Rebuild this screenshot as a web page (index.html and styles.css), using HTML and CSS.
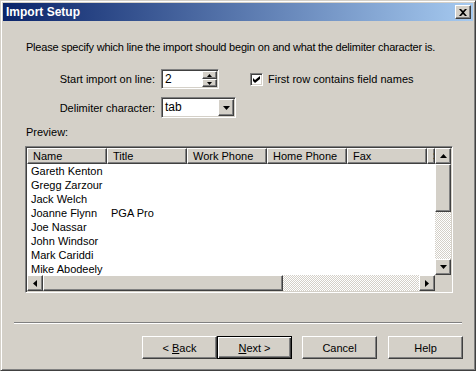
FILE: index.html
```html
<!DOCTYPE html>
<html lang="en">
<head>
  <meta charset="UTF-8" />
  <title>Import Setup</title>
  <link rel="stylesheet" href="styles.css">
</head>
<body>
  <div class="janela">
    <!-- barra de titulo -->
    <div class="titulo">
      <span class="titulo-texto">Import Setup</span>
      <div class="fechar">
        <svg width="8" height="7" viewBox="0 0 8 7"><path d="M0 0h2l2 2 2-2h2L5 3.5 8 7H6L4 5 2 7H0l3-3.5z" fill="#000"/></svg>
      </div>
    </div>

    <div class="conteudo">
      <p class="intro">Please specify which line the import should begin on and what the delimiter character is.</p>

      <div class="linha">
        <label class="rotulo">Start import on line:</label>
        <div class="spin">
          <span class="valor">2</span>
          <div class="spin-botoes">
            <div class="botao-mini"><svg width="5" height="3" viewBox="0 0 5 3"><path d="M2.5 0L5 3H0z" fill="#000"/></svg></div>
            <div class="botao-mini"><svg width="5" height="3" viewBox="0 0 5 3"><path d="M0 0h5L2.5 3z" fill="#000"/></svg></div>
          </div>
        </div>
        <div class="check">
          <div class="caixa">
            <svg width="7" height="7" viewBox="0 0 7 7"><path d="M0 2l2 2 5-4v3l-5 4-2-2z" fill="#000"/></svg>
          </div>
          <span>First row contains field names</span>
        </div>
      </div>

      <div class="linha">
        <label class="rotulo">Delimiter character:</label>
        <div class="combo">
          <span class="valor">tab</span>
          <div class="botao-combo"><svg width="7" height="4" viewBox="0 0 7 4"><path d="M0 0h7L3.5 4z" fill="#000"/></svg></div>
        </div>
      </div>

      <p class="preview-rotulo">Preview:</p>

      <div class="lista">
        <div class="lista-area">
          <div class="cabecalho">
            <div class="col">Name</div>
            <div class="col">Title</div>
            <div class="col">Work Phone</div>
            <div class="col">Home Phone</div>
            <div class="col">Fax</div>
            <div class="col col-ultima">S</div>
          </div>
          <div class="item"><span class="cel">Gareth Kenton</span><span class="cel"></span></div>
          <div class="item"><span class="cel">Gregg Zarzour</span><span class="cel"></span></div>
          <div class="item"><span class="cel">Jack Welch</span><span class="cel"></span></div>
          <div class="item"><span class="cel">Joanne Flynn</span><span class="cel">PGA Pro</span></div>
          <div class="item"><span class="cel">Joe Nassar</span><span class="cel"></span></div>
          <div class="item"><span class="cel">John Windsor</span><span class="cel"></span></div>
          <div class="item"><span class="cel">Mark Cariddi</span><span class="cel"></span></div>
          <div class="item"><span class="cel">Mike Abodeely</span><span class="cel"></span></div>
        </div>

        <div class="vscroll">
          <div class="seta"><svg width="7" height="4" viewBox="0 0 7 4"><path d="M3.5 0L7 4H0z" fill="#000"/></svg></div>
          <div class="polegar-v"></div>
          <div class="trilho"></div>
          <div class="seta"><svg width="7" height="4" viewBox="0 0 7 4"><path d="M0 0h7L3.5 4z" fill="#000"/></svg></div>
        </div>

        <div class="hscroll">
          <div class="seta"><svg width="4" height="7" viewBox="0 0 4 7"><path d="M0 3.5L4 0v7z" fill="#000"/></svg></div>
          <div class="polegar-h"></div>
          <div class="trilho"></div>
          <div class="seta"><svg width="4" height="7" viewBox="0 0 4 7"><path d="M0 0l4 3.5L0 7z" fill="#000"/></svg></div>
        </div>

        <div class="canto"></div>
      </div>

      <div class="separador"></div>

      <div class="botoes">
        <button class="botao">&lt; <u>B</u>ack</button>
        <button class="botao padrao"><u>N</u>ext &gt;</button>
        <button class="botao espaco">Cancel</button>
        <button class="botao espaco-help">Help</button>
      </div>
    </div>
  </div>
</body>
</html>
```

FILE: styles.css
```css
* {
  box-sizing: border-box;
}

body {
  margin: 0;
  font-family: "Liberation Sans", Arial, sans-serif;
  font-size: 11px;
  color: #000;
}

.janela {
  width: 476px;
  height: 371px;
  background: #d4d0c8;
  border: 1px solid;
  border-color: #d4d0c8 #404040 #404040 #d4d0c8;
  box-shadow: inset 1px 1px #fff, inset -1px -1px #808080;
  padding: 2px;
}

.titulo {
  height: 18px;
  background: linear-gradient(to right, #0a246a, #a6caf0);
  display: flex;
  align-items: center;
  justify-content: space-between;
  padding: 0 2px 0 2px;
}

.titulo-texto {
  color: #fff;
  font-weight: bold;
  font-size: 12px;
  padding-left: 1px;
}

.fechar,
.botao-mini,
.botao-combo,
.seta,
.polegar-v,
.polegar-h,
.col {
  background: #d4d0c8;
  border: 1px solid;
  border-color: #fff #404040 #404040 #fff;
  box-shadow: inset -1px -1px #808080;
}

.fechar {
  width: 16px;
  height: 14px;
  display: flex;
  align-items: center;
  justify-content: center;
}

.conteudo {
  padding: 20px 0 0 23px;
}

.intro {
  margin: 0;
  line-height: 13px;
  letter-spacing: -0.22px;
}

.linha {
  display: flex;
  align-items: center;
  margin-top: 15px;
}

.linha + .linha {
  margin-top: 8px;
}

.rotulo {
  width: 135px;
  text-align: right;
  padding-right: 6px;
}

.spin,
.combo,
.caixa,
.lista {
  background: #fff;
  border: 1px solid;
  border-color: #808080 #fff #fff #808080;
  box-shadow: inset 1px 1px #404040, inset -1px -1px #d4d0c8;
  padding: 1px;
}

.spin {
  width: 58px;
  height: 20px;
  display: flex;
}

.valor {
  flex: 1;
  padding-left: 2px;
  line-height: 16px;
  font-size: 12px;
}

.spin-botoes {
  width: 15px;
  display: flex;
  flex-direction: column;
}

.botao-mini {
  flex: 1;
  display: flex;
  align-items: center;
  justify-content: center;
}

.check {
  display: flex;
  align-items: center;
  margin-left: 31px;
  gap: 5px;
}

.caixa {
  width: 13px;
  height: 13px;
  display: flex;
  align-items: center;
  justify-content: center;
  padding: 0;
}

.combo {
  width: 75px;
  height: 21px;
  display: flex;
}

.botao-combo {
  width: 16px;
  display: flex;
  align-items: center;
  justify-content: center;
}

.preview-rotulo {
  margin: 8px 0 7px 0;
  line-height: 13px;
}

.lista {
  width: 428px;
  height: 147px;
  margin-left: -1px;
  display: grid;
  grid-template-columns: 408px 16px;
  grid-template-rows: 127px 16px;
  padding: 1px;
}

.lista-area {
  overflow: hidden;
  background: #fff;
}

.cabecalho {
  display: flex;
  height: 16px;
}

.col {
  flex: 0 0 80px;
  height: 16px;
  line-height: 14px;
  padding-left: 5px;
  white-space: nowrap;
  overflow: hidden;
}

.col-ultima {
  flex: 0 0 8px;
  padding-left: 5px;
}

.item {
  display: flex;
  height: 14px;
  line-height: 14px;
}

.cel {
  width: 80px;
  padding-left: 4px;
  white-space: nowrap;
}

.vscroll {
  display: flex;
  flex-direction: column;
}

.hscroll {
  display: flex;
}

.seta {
  flex: 0 0 16px;
  height: 16px;
  display: flex;
  align-items: center;
  justify-content: center;
}

.polegar-v {
  height: 48px;
}

.polegar-h {
  width: 240px;
}

.trilho {
  flex: 1;
  background: repeating-conic-gradient(#d4d0c8 0 25%, #fff 0 50%) 0 0 / 2px 2px;
}

.canto {
  background: #d4d0c8;
}

.separador {
  width: 448px;
  margin: 29px 0 0 -12px;
  border-top: 1px solid #808080;
  border-bottom: 1px solid #fff;
}

.botoes {
  display: flex;
  margin: 12px 0 0 116px;
}

.botao {
  width: 75px;
  height: 23px;
  font-family: inherit;
  font-size: 11px;
  color: #000;
  background: #d4d0c8;
  border: 1px solid;
  border-color: #fff #404040 #404040 #fff;
  box-shadow: inset -1px -1px #808080;
  padding: 0;
}

.padrao {
  border: 1px solid #000;
  box-shadow: inset 1px 1px #fff, inset -1px -1px #404040, inset -2px -2px #808080;
}

.espaco {
  margin-left: 10px;
}

.espaco-help {
  margin-left: 11px;
}
```
